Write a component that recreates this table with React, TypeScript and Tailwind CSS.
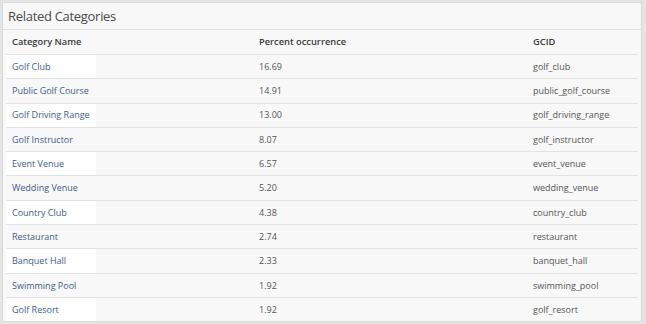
import React from "react";

interface Category {
  name: string;
  percent: string;
  gcid: string;
}

const categories: Category[] = [
  { name: "Golf Club", percent: "16.69", gcid: "golf_club" },
  { name: "Public Golf Course", percent: "14.91", gcid: "public_golf_course" },
  { name: "Golf Driving Range", percent: "13.00", gcid: "golf_driving_range" },
  { name: "Golf Instructor", percent: "8.07", gcid: "golf_instructor" },
  { name: "Event Venue", percent: "6.57", gcid: "event_venue" },
  { name: "Wedding Venue", percent: "5.20", gcid: "wedding_venue" },
  { name: "Country Club", percent: "4.38", gcid: "country_club" },
  { name: "Restaurant", percent: "2.74", gcid: "restaurant" },
  { name: "Banquet Hall", percent: "2.33", gcid: "banquet_hall" },
  { name: "Swimming Pool", percent: "1.92", gcid: "swimming_pool" },
  { name: "Golf Resort", percent: "1.92", gcid: "golf_resort" },
];

const App: React.FC = () => {
  return (
    <div
      className="w-[646px] h-[324px] bg-[#e4e4e4] pt-[2px] pl-[2px] pr-[4px] pb-[2px]"
      style={{ fontFamily: '"Open Sans", "Liberation Sans", sans-serif' }}
    >
      <div className="h-full bg-[#f8f8f8] border border-[#dadada] flex flex-col overflow-hidden">
        <div className="h-[27px] shrink-0 flex items-center px-[5px] border-b border-[#e0e0e0]">
          <h2 className="text-[13px] tracking-[-0.3px] text-[#4a4a4a] leading-none">Related Categories</h2>
        </div>
        <div className="px-[3px]">
          <div className="grid grid-cols-[247px_274px_1fr] h-[24px] items-center text-[9.3px] font-semibold text-[#3a3a3a]">
            <div className="pl-[6px]">Category Name</div>
            <div className="pl-[6px]">Percent occurrence</div>
            <div className="pl-[6px]">GCID</div>
          </div>
          {categories.map((c, i) => (
            <div
              key={c.gcid}
              className="grid grid-cols-[247px_274px_1fr] h-[24.3px] border-t border-[#e2e2e2] text-[9px]"
            >
              <div className="flex items-center">
                <div
                  className={`h-full flex items-center pl-[6px] ${
                    i % 2 === 0 ? "bg-white w-[90px]" : ""
                  }`}
                >
                  <span className="text-[#3d5c86] whitespace-nowrap">{c.name}</span>
                </div>
              </div>
              <div className="flex items-center pl-[6px] text-[#555]">{c.percent}</div>
              <div className="flex items-center pl-[6px] text-[#555]">{c.gcid}</div>
            </div>
          ))}
        </div>
      </div>
    </div>
  );
};

export default App;
